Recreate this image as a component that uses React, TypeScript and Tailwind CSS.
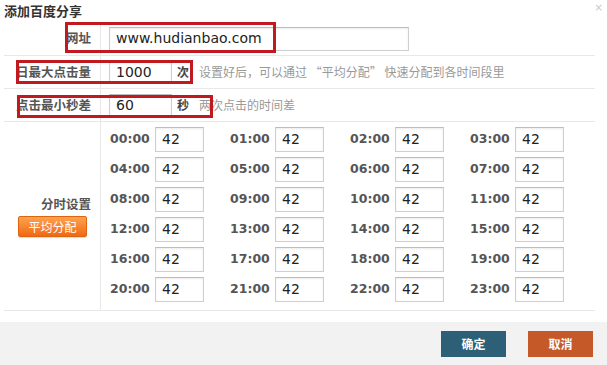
import React from "react";

const hours = Array.from({ length: 24 }, (_, i) => (i < 10 ? "0" + i : "" + i) + ":00");

const cjk = "font-['Noto_Sans_CJK_SC',sans-serif]";
const latin = "font-['DejaVu_Sans','Noto_Sans_CJK_SC',sans-serif]";

function Box({ value, className }: { value: string; className: string }) {
  return (
    <div
      className={`border border-[#cfcfcf] border-t-[#bdbdbd] bg-white shadow-[inset_0_1px_2px_rgba(0,0,0,0.08)] flex items-center pl-[6px] text-[14px] text-[#222] ${latin} ${className}`}
    >
      {value}
    </div>
  );
}

function Row({
  label,
  children,
  className,
}: {
  label: React.ReactNode;
  children: React.ReactNode;
  className: string;
}) {
  return (
    <div className={`flex border-b border-[#e8e8e8] ${className}`}>
      <div className="w-[97px] shrink-0 border-r border-[#e8e8e8] flex flex-col justify-center items-end pr-[9px]">
        {label}
      </div>
      <div className="flex-1 pl-[8px] flex items-center">{children}</div>
    </div>
  );
}

export default function App() {
  return (
    <div className={`relative w-[607px] h-[365px] bg-white overflow-hidden ${cjk}`}>
      <div className="h-[22px] pl-[4px] flex items-center text-[13px] font-bold text-[#333]">添加百度分享</div>
      <div className={`absolute right-[4px] top-[2px] text-[10px] leading-[12px] text-[#c8c8c8] ${latin}`}>×</div>

      <div className="mx-[4px] w-[591px]">
        <Row
          className="h-[34px]"
          label={<span className="text-[12.5px] font-bold text-[#555]">网址</span>}
        >
          <Box value="www.hudianbao.com" className="w-[300px] h-[24px]" />
        </Row>
        <Row
          className="h-[33px]"
          label={<span className="text-[12.5px] font-bold text-[#555]">日最大点击量</span>}
        >
          <Box value="1000" className="w-[63px] h-[23px]" />
          <span className="ml-[5px] text-[12px] font-bold text-[#444]">次</span>
          <span className="ml-[10px] text-[12px] text-[#999]">设置好后，可以通过 “平均分配” 快速分配到各时间段里</span>
        </Row>
        <Row
          className="h-[33px]"
          label={<span className="text-[12.5px] font-bold text-[#555]">点击最小秒差</span>}
        >
          <Box value="60" className="w-[63px] h-[23px]" />
          <span className="ml-[5px] text-[12px] font-bold text-[#444]">秒</span>
          <span className="ml-[10px] text-[12px] text-[#999]">两次点击的时间差</span>
        </Row>

        <div className="flex border-b border-[#e8e8e8] h-[189px]">
          <div className="w-[97px] shrink-0 border-r border-[#e8e8e8] flex flex-col justify-center">
            <div className="text-right pr-[9px] text-[12.5px] font-bold text-[#555] leading-[18px]">分时设置</div>
            <div className="mt-[3px] self-center ml-[1px] w-[69px] h-[21px] rounded-[2px] border border-[#dd6410] bg-gradient-to-b from-[#ffa24a] to-[#f0680e] text-white text-[12px] flex items-center justify-center shadow-[0_1px_1px_rgba(0,0,0,0.15)]">
              平均分配
            </div>
          </div>
          <div className="flex-1 pl-[9px] pt-[5px] grid grid-cols-[120px_120px_120px_120px] auto-rows-[30px]">
            {hours.map((h) => (
              <div key={h} className="flex items-start">
                <span className={`w-[45px] h-[25px] flex items-center text-[12.5px] font-bold text-[#555] ${latin}`}>{h}</span>
                <Box value="42" className="w-[49px] h-[25px]" />
              </div>
            ))}
          </div>
        </div>
      </div>

      <div className="absolute left-0 right-0 bottom-0 h-[43px] bg-[#f2f2f2] flex items-center justify-end pr-[14px] gap-[22px]">
        <div className="w-[65px] h-[26px] bg-[#2d6076] text-white text-[12px] font-bold flex items-center justify-center">确定</div>
        <div className="w-[65px] h-[26px] bg-[#c55a28] text-white text-[12px] font-bold flex items-center justify-center">取消</div>
      </div>

      <div className="absolute left-[65px] top-[22px] w-[211px] h-[31px] border-[3px] border-[#c01a20]" />
      <div className="absolute left-[16px] top-[60px] w-[177px] h-[24px] border-[3px] border-[#c01a20]" />
      <div className="absolute left-[17px] top-[95px] w-[196px] h-[23px] border-[3px] border-[#c01a20]" />
    </div>
  );
}
